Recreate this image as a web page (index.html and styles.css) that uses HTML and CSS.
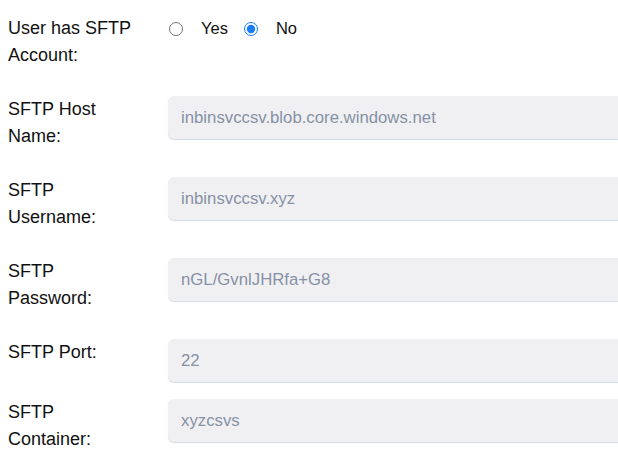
FILE: index.html
```html
<!DOCTYPE html>
<html lang="en">

<head>
    <meta charset="UTF-8">
    <meta name="viewport" content="width=device-width, initial-scale=1.0">
    <title>SFTP Settings</title>
    <link rel="stylesheet" href="styles.css">
</head>

<body>
    <div class="sftp_form">
        <div class="form_row">
            <div class="form_label">User has SFTP Account:</div>
            <div class="radio_group">
                <label class="radio_opt"><input type="radio" name="hasSftp" value="yes">Yes</label>
                <label class="radio_opt"><input type="radio" name="hasSftp" value="no" checked>No</label>
            </div>
        </div>

        <div class="form_row">
            <label class="form_label" for="sftpHost">SFTP Host Name:</label>
            <input class="form_input" type="text" id="sftpHost" value="inbinsvccsv.blob.core.windows.net" disabled>
        </div>

        <div class="form_row">
            <label class="form_label" for="sftpUser">SFTP Username:</label>
            <input class="form_input" type="text" id="sftpUser" value="inbinsvccsv.xyz" disabled>
        </div>

        <div class="form_row">
            <label class="form_label" for="sftpPass">SFTP Password:</label>
            <input class="form_input" type="text" id="sftpPass" value="nGL/GvnlJHRfa+G8" disabled>
        </div>

        <div class="form_row">
            <label class="form_label" for="sftpPort">SFTP Port:</label>
            <input class="form_input" type="text" id="sftpPort" value="22" disabled>
        </div>

        <div class="form_row">
            <label class="form_label" for="sftpContainer">SFTP Container:</label>
            <input class="form_input" type="text" id="sftpContainer" value="xyzcsvs" disabled>
        </div>
    </div>
</body>

</html>
```

FILE: styles.css
```css
/* 기본 설정 */
html,
body {
    background-color: #ffffff;
}

body {
    margin: 8px 0 8px 8px;
    font-family: "Liberation Sans", Arial, sans-serif;
    color: #111111;
}

.sftp_form {
    padding-top: 7px;
}

/* 행 */
.form_row {
    display: flex;
    align-items: flex-start;
}

.form_label {
    box-sizing: border-box;
    flex: 0 0 160px;
    width: 160px;
    padding-right: 30px;
    font-size: 18px;
    line-height: 27px;
    margin-bottom: 27px;
}

/* 라디오 */
.radio_group {
    display: flex;
    align-items: center;
    height: 27px;
    font-size: 16.5px;
}

.radio_opt {
    display: flex;
    align-items: center;
}

.radio_opt input {
    width: 14px;
    height: 14px;
    margin: 0 18px 0 1px;
    accent-color: #1b7cf6;
}

.radio_opt + .radio_opt input {
    margin-left: 16px;
}

/* 입력 필드 (오른쪽 끝은 화면에서 잘림) */
.form_input {
    box-sizing: border-box;
    flex: 1 1 auto;
    min-width: 0;
    height: 43px;
    margin: 0 0 17px 0;
    padding: 0 13px;
    border: none;
    border-radius: 6px 0 0 6px;
    background-color: #f0f0f3;
    color: #8791a5;
    font-family: "Liberation Sans", Arial, sans-serif;
    font-size: 16.75px;
    box-shadow: 0 1px 1px rgba(110, 130, 160, 0.3);
}

.form_input:disabled {
    opacity: 1;
    -webkit-text-fill-color: #8791a5;
}
```
